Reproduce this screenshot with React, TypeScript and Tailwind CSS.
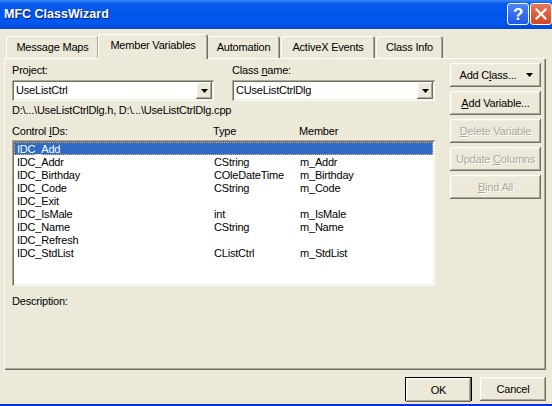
import React from 'react';

const raised =
  'shadow-[inset_-1px_-1px_0_#716F64,inset_1px_1px_0_#FFFFFF,inset_-2px_-2px_0_#ACA899,inset_2px_2px_0_#F1EFE2]';
const sunken =
  'shadow-[inset_1px_1px_0_#ACA899,inset_-1px_-1px_0_#FFFFFF,inset_2px_2px_0_#716F64,inset_-2px_-2px_0_#F1EFE2]';

const rows: [string, string, string][] = [
  ['IDC_Add', '', ''],
  ['IDC_Addr', 'CString', 'm_Addr'],
  ['IDC_Birthday', 'COleDateTime', 'm_Birthday'],
  ['IDC_Code', 'CString', 'm_Code'],
  ['IDC_Exit', '', ''],
  ['IDC_IsMale', 'int', 'm_IsMale'],
  ['IDC_Name', 'CString', 'm_Name'],
  ['IDC_Refresh', '', ''],
  ['IDC_StdList', 'CListCtrl', 'm_StdList'],
];

function DownArrow() {
  return (
    <svg width="7" height="4" viewBox="0 0 7 4">
      <path d="M0 0h7L3.5 4z" fill="#000" />
    </svg>
  );
}

function Combo({ value, width }: { value: string; width: string }) {
  return (
    <div className={`${width} h-[21px] bg-white ${sunken} flex items-center p-[2px]`}>
      <span className="flex-1 pl-[2px] leading-[13px]">{value}</span>
      <div className={`w-[16px] h-[17px] bg-[#ECE9D8] ${raised} flex items-center justify-center`}>
        <DownArrow />
      </div>
    </div>
  );
}

function Btn({
  children,
  disabled,
  className = '',
}: {
  children: React.ReactNode;
  disabled?: boolean;
  className?: string;
}) {
  return (
    <div
      className={`h-[24px] ${raised} bg-[#ECE9D8] flex items-center justify-center leading-[13px] ${
        disabled ? 'text-[#ACA899] [text-shadow:1px_1px_0_#fff]' : 'text-black'
      } ${className}`}
    >
      {children}
    </div>
  );
}

function Tab({ label, width, active }: { label: string; width: string; active?: boolean }) {
  return (
    <div
      className={`${width} flex items-center justify-center rounded-t-[3px] bg-[#ECE9D8] shadow-[inset_1px_1px_0_#FFFFFF,inset_-1px_0_0_#716F64,inset_-2px_0_0_#ACA899] ${
        active ? 'h-[25px] -mb-px -mx-[2px] relative z-10 pb-[2px]' : 'h-[22px]'
      }`}
    >
      {label}
    </div>
  );
}

export default function App() {
  return (
    <div className="w-[552px] h-[406px] bg-[#ECE9D8] flex flex-col overflow-hidden font-['Liberation_Sans',Arial,sans-serif] text-[11px] tracking-[-0.2px] text-black">
      {/* Title bar */}
      <div className="h-[29px] shrink-0 flex items-center pl-[4px] bg-[linear-gradient(to_bottom,#3C8CF6_0%,#0A5CEC_12%,#0055E8_45%,#0058EE_80%,#0046D2_100%)]">
        <span className="flex-1 text-white font-bold text-[12.5px] tracking-normal [text-shadow:1px_1px_0_#0A1E86]">
          MFC ClassWizard
        </span>
        <div className="flex gap-[1px] self-start mt-[3px]">
          <div className="w-[22px] h-[22px] rounded-[3px] border border-white bg-[linear-gradient(to_bottom,#4C86F6,#2257E4)] flex items-center justify-center text-white font-bold text-[17px] leading-none">
            ?
          </div>
          <div className="w-[22px] h-[22px] rounded-[3px] border border-white bg-[linear-gradient(to_bottom,#E8785A,#D44420)] flex items-center justify-center">
            <svg width="12" height="12" viewBox="0 0 12 12">
              <path d="M1.5 1.5l9 9M10.5 1.5l-9 9" stroke="#fff" strokeWidth="2.2" strokeLinecap="square" />
            </svg>
          </div>
        </div>
      </div>

      {/* Tabs */}
      <div className="mt-[5px] h-[24px] flex items-end gap-[1px] pl-[6px]">
        <Tab label="Message Maps" width="w-[93px]" />
        <Tab label="Member Variables" width="w-[110px]" active />
        <Tab label="Automation" width="w-[73px]" />
        <Tab label="ActiveX Events" width="w-[94px]" />
        <Tab label="Class Info" width="w-[67px]" />
      </div>

      {/* Tab page */}
      <div className="ml-[4px] w-[542px] h-[312px] shrink-0 shadow-[inset_1px_1px_0_#FFFFFF,inset_-1px_-1px_0_#716F64,inset_-2px_-2px_0_#ACA899] flex pl-[8px] pt-[6px]">
        <div className="w-[423px] flex flex-col">
          <div className="flex gap-[18px]">
            <div className="flex flex-col">
              <span className="leading-[13px]">
                Pro<u>j</u>ect:
              </span>
              <div className="mt-[3px]">
                <Combo value="UseListCtrl" width="w-[202px]" />
              </div>
            </div>
            <div className="flex flex-col">
              <span className="leading-[13px]">
                Class <u>n</u>ame:
              </span>
              <div className="mt-[3px]">
                <Combo value="CUseListCtrlDlg" width="w-[203px]" />
              </div>
            </div>
          </div>
          <div className="mt-[3px] leading-[13px]">D:\...\UseListCtrlDlg.h, D:\...\UseListCtrlDlg.cpp</div>
          <div className="mt-[8px] flex leading-[13px]">
            <span className="w-[201px]">
              Control <u>I</u>Ds:
            </span>
            <span className="w-[86px]">Type</span>
            <span>Member</span>
          </div>
          <div className={`mt-[2px] h-[146px] bg-white ${sunken} p-[2px]`}>
            {rows.map(([id, type, member], i) => (
              <div
                key={id}
                className={`h-[13px] flex leading-[12px] ${
                  i === 0 ? 'bg-[#316AC5] text-white border border-dotted border-[#E6B85C]' : 'border border-transparent'
                }`}
              >
                <span className="w-[199px] pl-[2px]">{id}</span>
                <span className="w-[86px]">{type}</span>
                <span>{member}</span>
              </div>
            ))}
          </div>
          <div className="mt-[9px] leading-[13px]">Description:</div>
        </div>

        <div className="ml-[15px] -mt-[1px] w-[91px] flex flex-col gap-[4px]">
          <Btn className="gap-[10px] pl-[2px]">
            <span>
              Add C<u>l</u>ass...
            </span>
            <DownArrow />
          </Btn>
          <Btn>
            <span>
              <u>A</u>dd Variable...
            </span>
          </Btn>
          <Btn disabled>
            <span>
              <u>D</u>elete Variable
            </span>
          </Btn>
          <Btn disabled>
            <span>
              Update <u>C</u>olumns
            </span>
          </Btn>
          <Btn disabled>
            <span>
              <u>B</u>ind All
            </span>
          </Btn>
        </div>
      </div>

      {/* Dialog buttons */}
      <div className="mt-[7px] flex justify-end gap-[8px] pr-[6px]">
        <div className="w-[67px] h-[24px] border border-black flex">
          <Btn className="flex-1 h-[22px]">OK</Btn>
        </div>
        <Btn className="w-[66px]">Cancel</Btn>
      </div>
      <div className="flex-1" />
      <div className="h-[2px] bg-[#0831D9]" />
    </div>
  );
}
